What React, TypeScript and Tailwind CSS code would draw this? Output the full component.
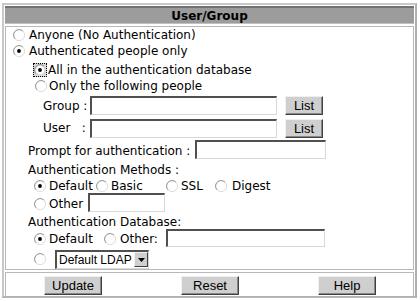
import React from 'react'

const verdana = { fontFamily: '"DejaVu Sans", Verdana, sans-serif' }
const arial = { fontFamily: '"Liberation Sans", Arial, sans-serif' }

function Radio({ checked = false, focus = false }: { checked?: boolean; focus?: boolean }) {
  const dot = (
    <svg width="12" height="12" viewBox="0 0 12 12" className="block">
      <path d="M10 2.2 A5.3 5.3 0 0 0 2.2 10" fill="none" stroke="#8a8a8a" strokeWidth="1" />
      <path d="M2.2 10 A5.3 5.3 0 0 0 10 2.2" fill="none" stroke="#dcdcdc" strokeWidth="1" />
      <circle cx="6" cy="6" r="4.3" fill="#fff" />
      {checked && <circle cx="6" cy="6" r="1.9" fill="#000" />}
    </svg>
  )
  if (focus) {
    return (
      <span className="inline-flex items-center justify-center w-[14px] h-[14px] border border-dotted border-black bg-[#d8d8d8]">
        {dot}
      </span>
    )
  }
  return <span className="inline-flex w-[12px] justify-center">{dot}</span>
}

function TextBox({ w, h = 19 }: { w: string; h?: number }) {
  return (
    <span
      className={`inline-block ${w} bg-white border-t-2 border-l-2 border-r border-b border-t-[#505050] border-l-[#505050] border-r-[#d8d8d8] border-b-[#d8d8d8]`}
      style={{ height: h }}
    />
  )
}

function Btn({ label, w }: { label: string; w: string }) {
  return (
    <span
      className={`inline-flex items-center justify-center ${w} h-[19px] bg-[#cfcfcf] border border-t-[#f0f0f0] border-l-[#f0f0f0] border-r-[#404040] border-b-[#404040] shadow-[inset_-1px_-1px_0_#888] text-[13px] text-black`}
      style={arial}
    >
      {label}
    </span>
  )
}

export default function App() {
  return (
    <div className="w-[420px] h-[301px] bg-white pt-[3px] pl-[2px]" style={verdana}>
      <div className="w-[415px] h-[295px] border-2 border-[#c8c8c8] border-r-[#b0b0b0] border-b-[#b0b0b0] flex flex-col gap-[2px] p-[1px]">

        {/* Title */}
        <div className="h-[18px] bg-[#9c9c9c] border-t-2 border-[#707070] border-b border-b-[#c0c0c0] flex items-center justify-center">
          <span className="text-[12px] font-bold text-black">User/Group</span>
        </div>

        {/* Body */}
        <div className="h-[244px] border border-[#b8b8b8] text-[12px] text-black leading-none flex flex-col">
          <div className="h-[16px] flex items-center pl-[7px]">
            <Radio /><span className="ml-[4px]">Anyone (No Authentication)</span>
          </div>
          <div className="h-[16px] flex items-center pl-[7px]">
            <Radio checked /><span className="ml-[4px]">Authenticated people only</span>
          </div>
          <div className="mt-[3px] h-[16px] flex items-center pl-[27px]">
            <Radio checked focus /><span className="ml-[1px]">All in the authentication database</span>
          </div>
          <div className="h-[16px] flex items-center pl-[29px]">
            <Radio /><span className="ml-[2px]">Only the following people</span>
          </div>

          <div className="mt-[2px] h-[20px] flex items-center">
            <span className="w-[84px] pl-[37px] whitespace-pre">Group :</span>
            <TextBox w="w-[187px]" />
            <span className="ml-[8px]"><Btn label="List" w="w-[38px]" /></span>
          </div>
          <div className="mt-[3px] h-[20px] flex items-center">
            <span className="w-[84px] pl-[37px] whitespace-pre">User   :</span>
            <TextBox w="w-[187px]" />
            <span className="ml-[8px]"><Btn label="List" w="w-[38px]" /></span>
          </div>

          <div className="mt-[3px] h-[19px] flex items-center pl-[22px]">
            <span>Prompt for authentication :</span>
            <span className="ml-[5px]"><TextBox w="w-[131px]" /></span>
          </div>
          <div className="mt-[2px] h-[16px] flex items-center pl-[22px]">
            Authentication Methods :
          </div>
          <div className="h-[16px] flex items-center pl-[28px]">
            <span className="w-[62px] flex items-center"><Radio checked /><span className="ml-[3px]">Default</span></span>
            <span className="w-[70px] flex items-center"><Radio /><span className="ml-[3px]">Basic</span></span>
            <span className="w-[49px] flex items-center"><Radio /><span className="ml-[3px]">SSL</span></span>
            <span className="flex items-center"><Radio /><span className="ml-[5px]">Digest</span></span>
          </div>
          <div className="h-[19px] flex items-center pl-[28px]">
            <Radio /><span className="ml-[3px]">Other</span>
            <span className="ml-[5px]"><TextBox w="w-[77px]" /></span>
          </div>
          <div className="mt-[1px] h-[16px] flex items-center pl-[22px]">
            Authentication Database:
          </div>
          <div className="h-[18px] flex items-center pl-[28px]">
            <span className="w-[70px] flex items-center"><Radio checked /><span className="ml-[3px]">Default</span></span>
            <Radio /><span className="ml-[4px]">Other:</span>
            <span className="ml-[8px]"><TextBox w="w-[159px]" h={18} /></span>
          </div>
          <div className="mt-[1px] h-[20px] flex items-center pl-[28px]">
            <Radio />
            <span
              className="ml-[9px] inline-flex items-center w-[94px] h-[19px] bg-white border-t-2 border-l-2 border-r border-b border-t-[#505050] border-l-[#505050] border-r-[#d8d8d8] border-b-[#d8d8d8] text-[12px] whitespace-nowrap"
              style={arial}
            >
              <span className="flex-1 pl-[2px]">Default LDAP</span>
              <span className="w-[14px] h-[15px] bg-[#cfcfcf] border border-t-[#f0f0f0] border-l-[#f0f0f0] border-r-[#404040] border-b-[#404040] flex items-center justify-center">
                <svg width="7" height="4" viewBox="0 0 7 4"><path d="M0 0h7L3.5 4z" fill="#000" /></svg>
              </span>
            </span>
          </div>
        </div>

        {/* Buttons */}
        <div className="flex-1 border border-[#b8b8b8] flex items-center">
          <span className="ml-[38px]"><Btn label="Update" w="w-[58px]" /></span>
          <span className="ml-[79px]"><Btn label="Reset" w="w-[58px]" /></span>
          <span className="ml-[79px]"><Btn label="Help" w="w-[58px]" /></span>
        </div>
      </div>
    </div>
  )
}
